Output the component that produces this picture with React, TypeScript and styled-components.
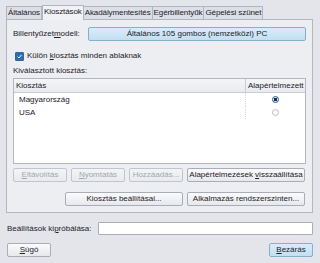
import styled, { createGlobalStyle } from 'styled-components';

const GlobalStyle = createGlobalStyle`
  html, body {
    margin: 0;
    padding: 0;
    background: #e3e5eb;
  }

  body {
    font-family: 'Liberation Sans', Arial, sans-serif;
    font-size: 8px;
    color: #1e2128;
  }
`;

const Window = styled.div`
  width: 320px;
  height: 263px;
  box-sizing: border-box;
  padding: 6px 7px 0 6px;
  background: #e3e5eb;
`;

const TabBar = styled.div`
  display: flex;
  align-items: flex-end;
  height: 13px;
`;

const Tab = styled.div<{ $active?: boolean }>`
  position: relative;
  z-index: ${(p) => (p.$active ? 1 : 0)};
  box-sizing: border-box;
  height: ${(p) => (p.$active ? '15px' : '13px')};
  margin-bottom: ${(p) => (p.$active ? '-1px' : '0')};
  padding: 0 1px;
  line-height: 12px;
  letter-spacing: -0.1px;
  border: 1px solid #b2b6c0;
  border-bottom: none;
  border-left: ${(p) => (p.$active ? '1px solid #b2b6c0' : 'none')};
  background: ${(p) => (p.$active ? '#f1f2f5' : '#dcdfe6')};
  white-space: nowrap;

  &:first-child {
    border-left: 1px solid #b2b6c0;
  }
`;

const Panel = styled.div`
  border: 1px solid #b2b6c0;
  background: #eceef2;
  padding: 7px 6px 6px 6px;
`;

const ModelRow = styled.div`
  display: flex;
  align-items: center;
  height: 14px;
`;

const Label = styled.span`
  white-space: nowrap;
  line-height: 12px;
`;

const ModelLabel = styled(Label)`
  width: 75px;
`;

const Button = styled.button<{ $tone?: 'blue' }>`
  box-sizing: border-box;
  height: 14px;
  padding: 0 1px;
  margin: 0;
  font-family: inherit;
  font-size: 8px;
  line-height: 12px;
  color: #1e2128;
  border: 1px solid ${(p) => (p.$tone === 'blue' ? '#86aecd' : '#a9adb6')};
  border-radius: 2px;
  background: ${(p) =>
    p.$tone === 'blue'
      ? 'linear-gradient(#d9ecf9, #c3dff3)'
      : 'linear-gradient(#fbfbfc, #e6e8ec)'};
  white-space: nowrap;
  overflow: hidden;

  &:disabled {
    color: #a3a7af;
    border-color: #c2c5cc;
    background: linear-gradient(#f3f4f6, #e8eaee);
  }
`;

const ModelButton = styled(Button)`
  flex: 1;
`;

const CheckRow = styled.label`
  display: flex;
  align-items: center;
  gap: 3px;
  height: 12px;
  margin-top: 9px;
  padding-left: 2px;
`;

const CheckBox = styled.span`
  display: inline-flex;
  align-items: center;
  justify-content: center;
  width: 7px;
  height: 7px;
  border: 1px solid #31689a;
  border-radius: 1px;
  background: #2d6fae;
`;

const Caption = styled.div`
  height: 12px;
  line-height: 12px;
  margin-top: 3px;
`;

const ListBox = styled.div`
  margin-top: 1px;
  height: 86px;
  box-sizing: border-box;
  border: 1px solid #b2b6c0;
  background: #ffffff;
`;

const ListHeader = styled.div`
  display: grid;
  grid-template-columns: 1fr 60px;
  height: 13px;
  border-bottom: 1px solid #c9ccd3;
  background: linear-gradient(#f4f5f7, #e9ebef);
  line-height: 13px;
`;

const HeaderCell = styled.div<{ $right?: boolean }>`
  padding-left: 2px;
  border-left: ${(p) => (p.$right ? '1px solid #c9ccd3' : 'none')};
  white-space: nowrap;
`;

const ListRow = styled.div`
  display: grid;
  grid-template-columns: 1fr 60px;
  height: 13px;
  line-height: 13px;
`;

const RowCell = styled.div`
  padding-left: 5px;
`;

const RadioCell = styled.div`
  display: flex;
  align-items: center;
  justify-content: center;
  border-left: 1px dotted #d4d7dd;
`;

const Radio = styled.span<{ $checked?: boolean }>`
  box-sizing: border-box;
  width: 7px;
  height: 7px;
  border-radius: 50%;
  border: 1px solid ${(p) => (p.$checked ? '#2c5d8c' : '#b9bcc3')};
  background: ${(p) =>
    p.$checked ? 'radial-gradient(circle, #0d2f52 0 45%, #dde8f2 55%)' : '#ffffff'};
`;

const ButtonRow = styled.div<{ $gap?: number }>`
  display: flex;
  justify-content: flex-end;
  gap: 4px;
  margin-top: ${(p) => p.$gap ?? 4}px;
  padding-right: 1px;
`;

const SmallButton = styled(Button)`
  width: 54px;
`;

const WideButton = styled(Button)`
  width: 118px;
`;

const TryRow = styled.div`
  display: flex;
  align-items: center;
  margin-top: 9px;
  padding-left: 1px;
`;

const TryInput = styled.input`
  flex: 1;
  box-sizing: border-box;
  height: 13px;
  margin-left: 6px;
  border: 1px solid #a9adb6;
  border-radius: 1px;
  background: #ffffff;
  font-family: inherit;
  font-size: 8px;
  padding: 0 2px;
  outline: none;
`;

const Footer = styled.div`
  display: flex;
  justify-content: space-between;
  margin-top: 8px;
  padding-left: 1px;
`;

const FooterButton = styled(Button)`
  width: 44px;
`;

const layouts = [
  { name: 'Magyarország', checked: true },
  { name: 'USA', checked: false },
];

const tabs = ['Általános', 'Kiosztások', 'Akadálymentesítés', 'Egérbillentyűk', 'Gépelési szünet'];

export default function App() {
  return (
    <Window>
      <GlobalStyle />
      <TabBar>
        {tabs.map((t) => (
          <Tab key={t} $active={t === 'Kiosztások'}>
            {t}
          </Tab>
        ))}
      </TabBar>
      <Panel>
        <ModelRow>
          <ModelLabel>
            Billentyűzet<u>m</u>odell:
          </ModelLabel>
          <ModelButton $tone="blue">Általános 105 gombos (nemzetközi) PC</ModelButton>
        </ModelRow>
        <CheckRow>
          <CheckBox>
            <svg width="5" height="5" viewBox="0 0 5 5">
              <path d="M0.6 2.6 L2 4 L4.4 1" stroke="#ffffff" strokeWidth="1" fill="none" />
            </svg>
          </CheckBox>
          <Label>
            Külön <u>k</u>iosztás minden ablaknak
          </Label>
        </CheckRow>
        <Caption>Kiválasztott kiosztás:</Caption>
        <ListBox>
          <ListHeader>
            <HeaderCell>Kiosztás</HeaderCell>
            <HeaderCell $right>Alapértelmezett</HeaderCell>
          </ListHeader>
          {layouts.map((l) => (
            <ListRow key={l.name}>
              <RowCell>{l.name}</RowCell>
              <RadioCell>
                <Radio $checked={l.checked} />
              </RadioCell>
            </ListRow>
          ))}
        </ListBox>
        <ButtonRow>
          <SmallButton disabled>
            <u>E</u>ltávolítás
          </SmallButton>
          <SmallButton disabled>
            <u>N</u>yomtatás
          </SmallButton>
          <SmallButton disabled>Hozzáadás...</SmallButton>
          <WideButton>
            Alapértelmezések <u>v</u>isszaállítása
          </WideButton>
        </ButtonRow>
        <ButtonRow $gap={10}>
          <WideButton>Kiosztás beállításai...</WideButton>
          <WideButton>Alkalmazás rendszerszinten...</WideButton>
        </ButtonRow>
      </Panel>
      <TryRow>
        <Label>
          Beállítások ki<u>p</u>róbálása:
        </Label>
        <TryInput />
      </TryRow>
      <Footer>
        <FooterButton>
          <u>S</u>úgó
        </FooterButton>
        <FooterButton $tone="blue">
          <u>B</u>ezárás
        </FooterButton>
      </Footer>
    </Window>
  );
}
